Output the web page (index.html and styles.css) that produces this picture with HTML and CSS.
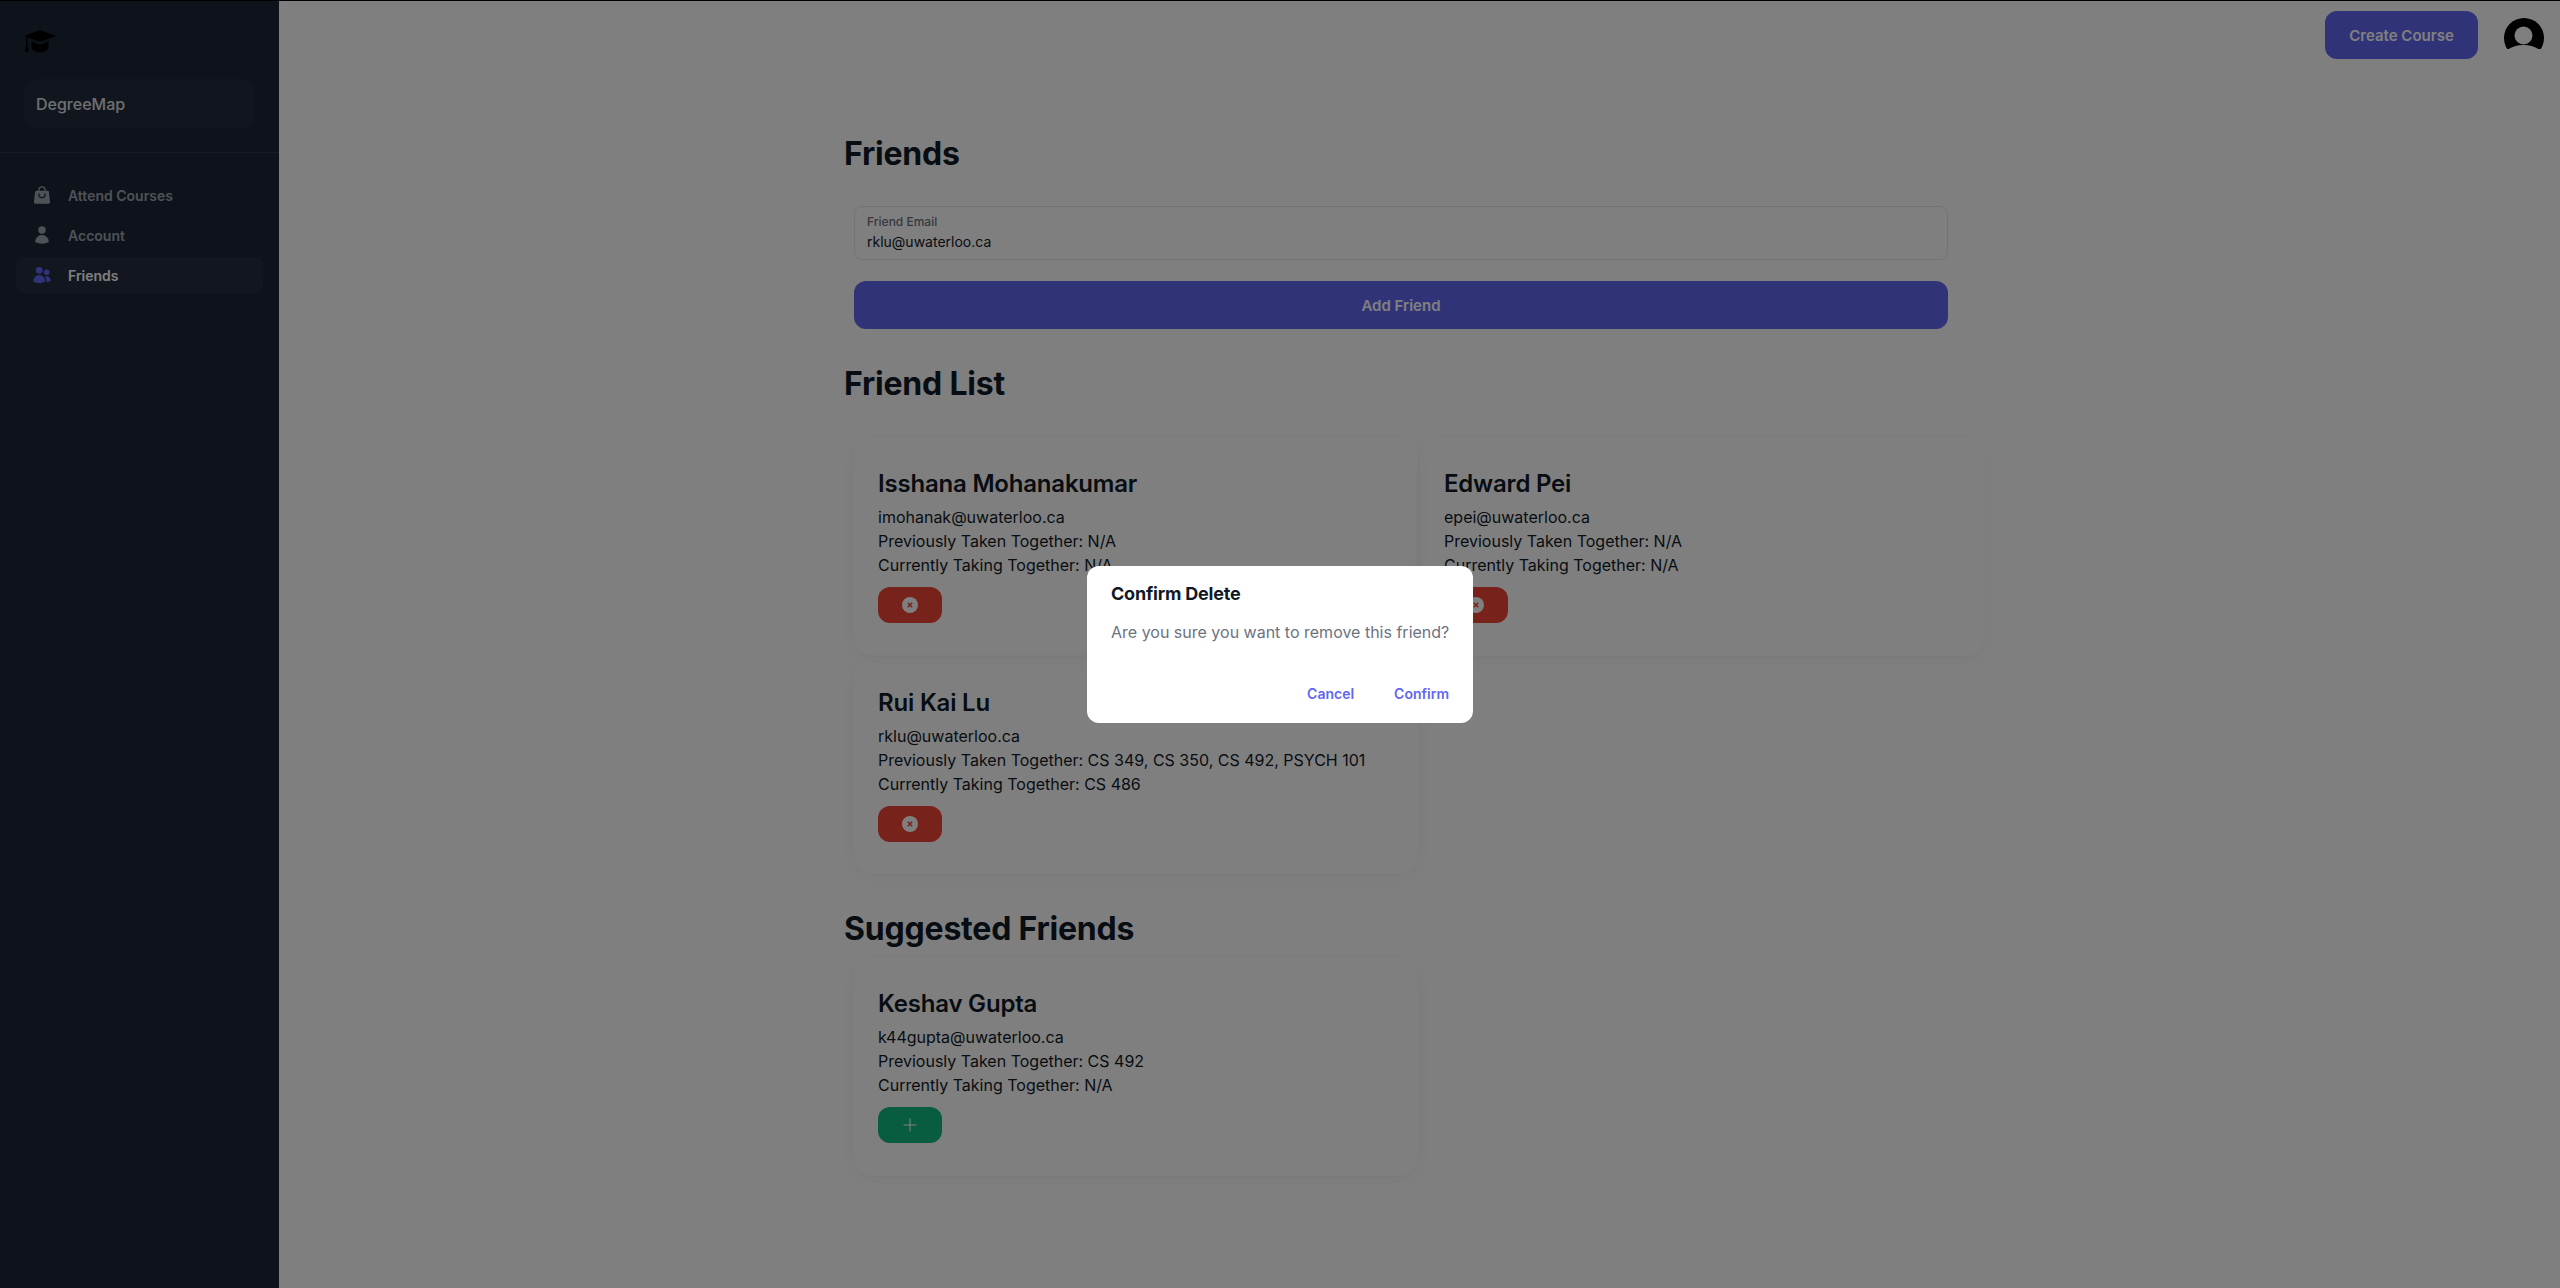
FILE: index.html
```html
<!DOCTYPE html>
<html lang="en">
<head>
<meta charset="utf-8">
<title>DegreeMap - Friends</title>
<link rel="stylesheet" href="styles.css">
</head>
<body>
<div class="app">
  <aside class="sidebar">
    <div class="brand">
      <svg class="logo" viewBox="0 0 32 22" aria-hidden="true"><path d="M16 0 32 6 16 12 0 6Z"/><path d="M2 7.2 3.6 7.8V15L5 21.5H0.8L2 15Z"/><path d="M7.5 11.2 16 14.4 24.5 11.2V17.5C24.5 20 20.5 22 16 22S7.5 20 7.5 17.5Z"/></svg>
      <div class="workspace">DegreeMap</div>
    </div>
    <nav class="nav">
      <a class="nav-item"><svg class="nav-icon" viewBox="0 0 24 24"><path fill-rule="evenodd" d="M7.5 6v.75H5.513c-.96 0-1.764.724-1.865 1.679l-1.263 12A1.875 1.875 0 004.25 22.5h15.5a1.875 1.875 0 001.865-2.071l-1.263-12a1.875 1.875 0 00-1.865-1.679H16.5V6a4.5 4.5 0 10-9 0zM12 3a3 3 0 00-3 3v.75h6V6a3 3 0 00-3-3zm-3 8.25a3 3 0 106 0v-.75a.75.75 0 011.5 0v.75a4.5 4.5 0 11-9 0v-.75a.75.75 0 011.5 0v.75z" clip-rule="evenodd"/></svg>Attend Courses</a>
      <a class="nav-item"><svg class="nav-icon" viewBox="0 0 24 24"><path fill-rule="evenodd" d="M7.5 6a4.5 4.5 0 119 0 4.5 4.5 0 01-9 0zM3.751 20.105a8.25 8.25 0 0116.498 0 .75.75 0 01-.437.695A18.683 18.683 0 0112 22.5c-2.786 0-5.433-.608-7.812-1.7a.75.75 0 01-.437-.695z" clip-rule="evenodd"/></svg>Account</a>
      <a class="nav-item is-active"><svg class="nav-icon" viewBox="0 0 24 24"><path d="M4.5 6.375a4.125 4.125 0 118.25 0 4.125 4.125 0 01-8.25 0zM14.25 8.625a3.375 3.375 0 116.75 0 3.375 3.375 0 01-6.75 0zM1.5 19.125a7.125 7.125 0 0114.25 0v.003l-.001.119a.75.75 0 01-.363.63 13.067 13.067 0 01-6.761 1.873c-2.472 0-4.786-.684-6.76-1.873a.75.75 0 01-.364-.63l-.001-.122zM17.25 19.128l-.001.144a2.25 2.25 0 01-.233.96 10.088 10.088 0 005.06-1.01.75.75 0 00.42-.643 4.875 4.875 0 00-6.957-4.611 8.586 8.586 0 011.71 5.157v.003z"/></svg>Friends</a>
    </nav>
  </aside>
  <div class="main">
    <header class="topbar">
      <button class="btn btn-primary btn-create">Create Course</button>
      <svg class="avatar" viewBox="0 0 40 31" aria-hidden="true"><circle cx="20" cy="20" r="20"/><ellipse cx="19.5" cy="44" rx="23" ry="17" fill="#fff"/><circle cx="19.5" cy="17.5" r="9" fill="#fff"/></svg>
    </header>
    <main class="content">
      <h1 class="page-title">Friends</h1>
      <form class="add-form">
        <label class="field">
          <span class="field-label">Friend Email</span>
          <span class="field-value">rklu@uwaterloo.ca</span>
        </label>
        <button type="button" class="btn btn-primary btn-add">Add Friend</button>
      </form>
      <h2 class="section-title">Friend List</h2>
      <div class="card-grid">
        <article class="card">
          <h3 class="card-name">Isshana Mohanakumar</h3>
          <p class="card-line card-email">imohanak@uwaterloo.ca</p>
          <p class="card-line">Previously Taken Together: N/A</p>
          <p class="card-line">Currently Taking Together: N/A</p>
          <button class="btn-action btn-remove"><svg class="remove-icon" viewBox="0 0 16 16"><circle cx="8" cy="8" r="8" fill="#fff"/><path d="M5.8 5.8 10.2 10.2M10.2 5.8 5.8 10.2" stroke="#F04438" stroke-width="1.5"/></svg></button>
        </article>
        <article class="card">
          <h3 class="card-name">Edward Pei</h3>
          <p class="card-line card-email">epei@uwaterloo.ca</p>
          <p class="card-line">Previously Taken Together: N/A</p>
          <p class="card-line">Currently Taking Together: N/A</p>
          <button class="btn-action btn-remove"><svg class="remove-icon" viewBox="0 0 16 16"><circle cx="8" cy="8" r="8" fill="#fff"/><path d="M5.8 5.8 10.2 10.2M10.2 5.8 5.8 10.2" stroke="#F04438" stroke-width="1.5"/></svg></button>
        </article>
        <article class="card">
          <h3 class="card-name">Rui Kai Lu</h3>
          <p class="card-line card-email">rklu@uwaterloo.ca</p>
          <p class="card-line">Previously Taken Together: CS 349, CS 350, CS 492, PSYCH 101</p>
          <p class="card-line">Currently Taking Together: CS 486</p>
          <button class="btn-action btn-remove"><svg class="remove-icon" viewBox="0 0 16 16"><circle cx="8" cy="8" r="8" fill="#fff"/><path d="M5.8 5.8 10.2 10.2M10.2 5.8 5.8 10.2" stroke="#F04438" stroke-width="1.5"/></svg></button>
        </article>
      </div>
      <h2 class="section-title section-suggested">Suggested Friends</h2>
      <div class="card-grid">
        <article class="card">
          <h3 class="card-name">Keshav Gupta</h3>
          <p class="card-line card-email">k44gupta@uwaterloo.ca</p>
          <p class="card-line">Previously Taken Together: CS 492</p>
          <p class="card-line">Currently Taking Together: N/A</p>
          <button class="btn-action btn-accept"><svg class="plus-icon" viewBox="0 0 16 16"><path d="M8 1.5V14.5M1.5 8H14.5" stroke="#fff" stroke-width="1.1"/></svg></button>
        </article>
      </div>
    </main>
  </div>
</div>
<div class="backdrop">
  <div class="dialog" role="dialog">
    <h2 class="dialog-title">Confirm Delete</h2>
    <p class="dialog-text">Are you sure you want to remove this friend?</p>
    <div class="dialog-actions">
      <button class="btn-text">Cancel</button>
      <button class="btn-text">Confirm</button>
    </div>
  </div>
</div>
</body>
</html>
```
FILE: styles.css
```css
* { box-sizing: border-box; }
html, body { margin: 0; height: 100%; }
body {
  font-family: Inter, "Liberation Sans", sans-serif;
  color: #111927;
  background: #fff;
  overflow: hidden;
  border-top: 1px solid #000;
}
p, h1, h2, h3 { margin: 0; }
button { font-family: inherit; border: 0; cursor: pointer; }

.app { display: flex; height: 1287px; }

/* Sidebar */
.sidebar { width: 279px; flex: none; background: #1C2536; color: #9DA4AE; }
.brand { padding: 29px 24px 24px; border-bottom: 1px solid #2F3746; }
.logo { display: block; width: 32px; height: 22px; fill: #000; margin-bottom: 27px; }
.workspace {
  height: 49px;
  padding-left: 12px;
  display: flex;
  align-items: center;
  border-radius: 12px;
  background: rgba(255, 255, 255, .04);
  color: #fff;
  opacity: .85;
  font-size: 16px;
  font-weight: 500;
}
.nav { padding: 24px 16px; display: flex; flex-direction: column; gap: 4px; }
.nav-item {
  height: 36px;
  padding-left: 16px;
  display: flex;
  align-items: center;
  gap: 16px;
  border-radius: 8px;
  font-size: 14px;
  font-weight: 600;
  color: #9DA4AE;
}
.nav-icon { width: 20px; height: 20px; flex: none; fill: #9DA4AE; }
.is-active { background: rgba(255, 255, 255, .04); color: #fff; }
.is-active .nav-icon { fill: #6366F1; }

/* Main */
.main { flex: 1; min-width: 0; }
.topbar {
  height: 66px;
  padding: 10px 16px 0 0;
  display: flex;
  justify-content: flex-end;
  align-items: flex-start;
  gap: 26px;
}
.btn { font-weight: 600; font-size: 15px; border-radius: 12px; color: #fff; }
.btn-primary { background: #6366F1; }
.btn-create { height: 48px; width: 153px; }
.avatar { width: 40px; height: 31px; margin-top: 7px; fill: #000; }

.content { width: 1152px; margin-left: 565px; padding-top: 68px; }
.page-title, .section-title {
  font-size: 32px;
  line-height: 38px;
  font-weight: 700;
  letter-spacing: -.2px;
}
.add-form { margin: 33px 0 36px 10px; width: 1094px; display: flex; flex-direction: column; gap: 21px; }
.field {
  height: 54px;
  padding: 7px 12px 0;
  border: 1px solid #E5E7EB;
  border-radius: 8px;
  display: flex;
  flex-direction: column;
}
.field-label { font-size: 12px; line-height: 16px; font-weight: 500; color: #6C737F; }
.field-value { font-size: 14px; line-height: 22px; margin-top: 1px; }
.btn-add { height: 48px; width: 100%; }

.card-grid { margin: 34px 0 36px 9px; width: 1132px; display: grid; grid-template-columns: 566px 566px; }
.section-suggested + .card-grid { margin-top: 9px; }
.card {
  height: 218.5px;
  padding: 32px 25px;
  border-radius: 20px;
  box-shadow: 0 5px 22px rgba(0, 0, 0, .04), 0 0 0 .5px rgba(0, 0, 0, .03);
}
.card-name { font-size: 24px; line-height: 29px; font-weight: 600; letter-spacing: -.2px; }
.card-line { font-size: 16px; line-height: 24px; }
.card-email { margin-top: 7px; }
.btn-action {
  margin-top: 10px;
  width: 64px;
  height: 36px;
  border-radius: 12px;
  display: flex;
  align-items: center;
  justify-content: center;
  padding: 0;
}
.btn-remove { background: #F04438; }
.btn-accept { background: #10B981; }
.remove-icon { width: 16px; height: 16px; }
.plus-icon { width: 16px; height: 16px; }

/* Dialog */
.backdrop {
  position: fixed;
  inset: 0;
  display: flex;
  align-items: center;
  justify-content: center;
  background: rgba(0, 0, 0, .5);
}
.dialog { width: 386px; height: 157px; background: #fff; border-radius: 12px; }
.dialog-title { padding: 17px 24px 0; font-size: 18px; line-height: 22px; font-weight: 700; letter-spacing: -.2px; }
.dialog-text { padding: 15px 24px 0; font-size: 16px; line-height: 24px; color: #6C737F; white-space: nowrap; }
.dialog-actions { margin-top: 29px; padding-right: 8px; display: flex; justify-content: flex-end; gap: 8px; }
.btn-text { height: 42px; padding: 0 16px; background: none; color: #6366F1; font-size: 14px; font-weight: 600; }
```
